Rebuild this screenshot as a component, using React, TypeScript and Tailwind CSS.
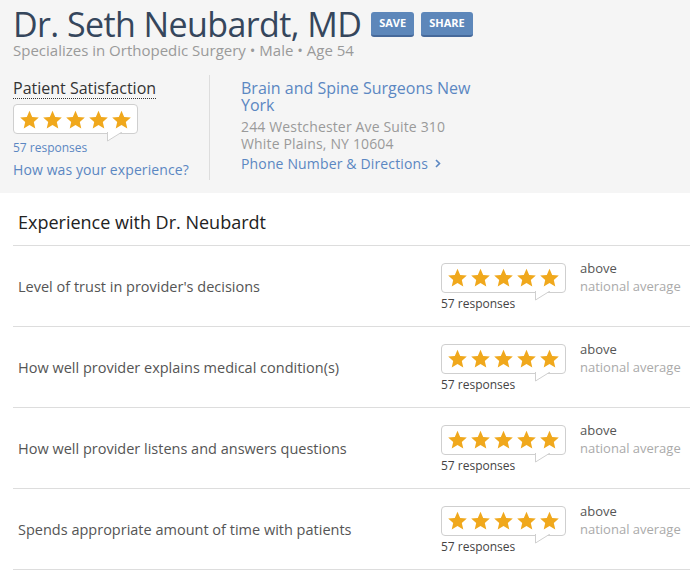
import React from 'react'

const STAR = 'M10 0.8l2.7 6.1 6.6.6-5 4.4 1.5 6.5L10 15l-5.8 3.4 1.5-6.5-5-4.4 6.6-.6z'

function Stars() {
  return (
    <div className="flex gap-[2px]">
      {[0, 1, 2, 3, 4].map((i) => (
        <svg key={i} width="21" height="19" viewBox="0 0 20 19">
          <path d={STAR} fill="#f0a81c" />
        </svg>
      ))}
    </div>
  )
}

function Bubble() {
  return (
    <div className="relative flex h-[30px] w-[125px] items-center rounded-[4px] border border-[#cfcfcf] bg-white pl-[5px]">
      <Stars />
      <svg
        className="absolute bottom-[-9px] left-[93px]"
        width="16"
        height="10"
        viewBox="0 0 16 10"
      >
        <polygon points="0.5,0 0.5,9 15,0" fill="#fff" />
        <path d="M0.5 0 V9 L15 0" fill="none" stroke="#cfcfcf" strokeWidth="1" />
      </svg>
    </div>
  )
}

const ROWS = [
  "Level of trust in provider's decisions",
  'How well provider explains medical condition(s)',
  'How well provider listens and answers questions',
  'Spends appropriate amount of time with patients',
]

export default function App() {
  return (
    <div className="h-[575px] w-[690px] overflow-hidden bg-white font-['Open_Sans',sans-serif]">
      <div className="bg-[#f5f5f5] px-[13px] pb-[13px] pt-[6px]">
        <div className="flex items-center gap-[10px]">
          <h1 className="text-[34px] leading-[36px] tracking-[-0.6px] text-[#35465c]">
            Dr. Seth Neubardt, MD
          </h1>
          <div className="flex gap-[7px]">
            <button className="h-[25px] rounded-[3px] border-b-2 border-[#46699a] bg-[#5d87ba] px-[8px] text-[11px] font-bold text-white">
              SAVE
            </button>
            <button className="h-[25px] rounded-[3px] border-b-2 border-[#46699a] bg-[#5d87ba] px-[8px] text-[11px] font-bold text-white">
              SHARE
            </button>
          </div>
        </div>
        <div className="text-[15px] leading-[16px] text-[#9a9a9a]">
          Specializes in Orthopedic Surgery • Male • Age 54
        </div>
        <div className="mt-[17px] flex">
          <div className="w-[197px] border-r border-[#dddddd] pt-[1px]">
            <div className="inline-block border-b border-dotted border-[#333] text-[16px] leading-[20px] text-[#333]">
              Patient Satisfaction
            </div>
            <div className="mt-[4px]">
              <Bubble />
            </div>
            <div className="mt-[6px] text-[12px] leading-[16px] text-[#5b87c2]">57 responses</div>
            <div className="mt-[4px] text-[14px] leading-[20px] tracking-[0.1px] text-[#5b87c2]">
              How was your experience?
            </div>
          </div>
          <div className="w-[270px] pl-[31px] pt-[5px]">
            <div className="w-[240px] text-[16px] leading-[17px] text-[#5b87c2]">
              Brain and Spine Surgeons New York
            </div>
            <div className="mt-[4px] text-[14px] leading-[17px] tracking-[0.15px] text-[#9a9a9a]">
              244 Westchester Ave Suite 310
              <br />
              White Plains, NY 10604
            </div>
            <div className="mt-[2px] flex items-center text-[14px] leading-[19px] tracking-[0.15px] text-[#5b87c2]">
              Phone Number &amp; Directions
              <svg className="ml-[7px]" width="6" height="9" viewBox="0 0 6 9">
                <path d="M1 1l3.5 3.5L1 8" fill="none" stroke="#5b87c2" strokeWidth="1.6" />
              </svg>
            </div>
          </div>
        </div>
      </div>
      <div className="pl-[13px]">
        <div className="border-b border-[#dddddd] pb-[11px] pl-[5px] pt-[17px] text-[18px] leading-[24px] text-[#222]">
          Experience with Dr. Neubardt
        </div>
        {ROWS.map((r) => (
          <div key={r} className="flex h-[81px] items-center border-b border-[#dddddd] pl-[5px]">
            <div className="w-[423px] pt-[1px] text-[14.5px] text-[#555]">{r}</div>
            <div className="pt-[2px]">
              <Bubble />
              <div className="mt-[3px] text-[12px] leading-[16px] text-[#444]">
                57 responses
              </div>
            </div>
            <div className="ml-[14px] self-start pt-[13px] text-[13px] leading-[18px]">
              <div className="text-[#555]">above</div>
              <div className="text-[#aaa]">national average</div>
            </div>
          </div>
        ))}
      </div>
    </div>
  )
}
